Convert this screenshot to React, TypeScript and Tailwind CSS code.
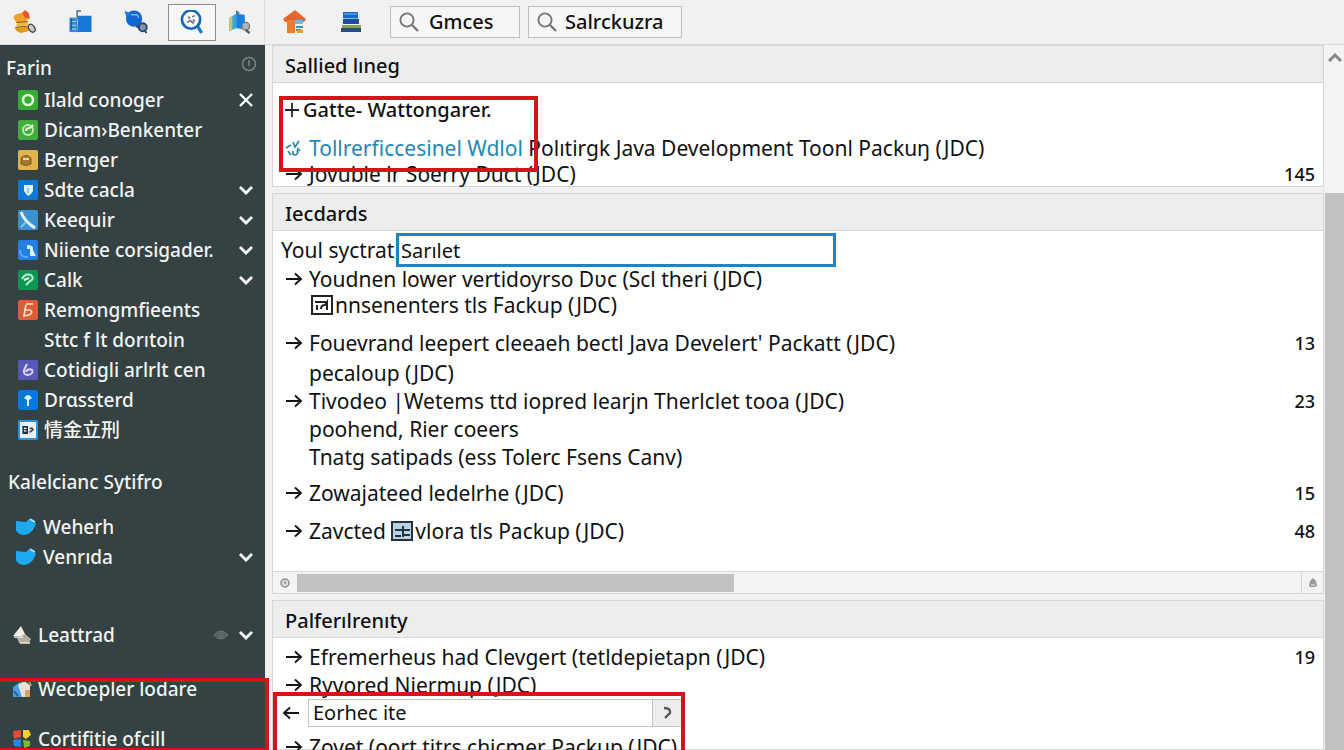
import { ReactNode } from "react";
import clsx from "clsx";

function Arrow({ left = false }: { left?: boolean }) {
    return (
        <svg viewBox="0 0 18 16" className="h-4 w-[18px] shrink-0" fill="none" stroke="#161616" strokeWidth="1.9">
            {left ? <path d="M17 8H2M8 2.5L2 8l6 5.5" /> : <path d="M1 8h15M10 2.5L16 8l-6 5.5" />}
        </svg>
    );
}

function Chevron() {
    return (
        <svg viewBox="0 0 14 10" className="h-2.5 w-3.5 shrink-0" fill="none" stroke="#fff" strokeWidth="2.8">
            <path d="M1 2l6 6 6-6" />
        </svg>
    );
}

function Magnifier() {
    return (
        <svg viewBox="0 0 20 20" className="size-5 shrink-0" fill="none" stroke="#777" strokeWidth="1.9">
            <circle cx="8" cy="8" r="6.6" />
            <path d="M13 13l6 6" strokeWidth="2.4" />
        </svg>
    );
}

/* Toolbar */

const tools: { label: string; active?: boolean; icon: ReactNode }[] = [
    {
        label: "Stamp",
        icon: (
            <>
                <path d="M1 8q0-4 8-5l6 1 2 5-4 3-9 1z" fill="#f0a325" />
                <path d="M10 3l3-3 4 3 1 6-5-1z" fill="#e5532c" />
                <path d="M5 13l9-2 3 4-7 3-6-1z" fill="#f4b63c" />
                <path d="M2 17q5 3 14 0l1 5-8 2q-6-1-7-7z" fill="#e39a1c" />
                <path d="M4 13l12-1M4 18l11-1" stroke="#6d5426" strokeWidth="1" />
                <ellipse cx="20" cy="19" rx="3" ry="4.5" transform="rotate(-35 20 19)" fill="#ccc" stroke="#444" strokeWidth="1.4" />
            </>
        ),
    },
    {
        label: "Folder",
        icon: (
            <>
                <path d="M10 6h14v17H9z" fill="#1778d8" />
                <path d="M9 10V1h4" stroke="#3c6a92" strokeWidth="1.5" fill="none" />
                <path d="M1 8h8v15H1z" fill="#2c8cdc" />
                <path d="M1 8h8M1 12h7M2 16h6M2 20h6" stroke="#a9c4c4" strokeWidth="1.2" />
                <path d="M3 9v12" stroke="#0b59b0" strokeWidth="1.5" />
            </>
        ),
    },
    {
        label: "Globe",
        icon: (
            <>
                <circle cx="10" cy="9" r="8.5" fill="#1467d0" />
                <path d="M0 1l8 3-6 3z" fill="#1a78dc" />
                <path d="M7 5h6l2 3" stroke="#72bdf5" strokeWidth="1.5" fill="none" />
                <circle cx="19" cy="18" r="4.2" fill="#8494a3" stroke="#2a4a74" strokeWidth="2" />
                <path d="M12 17l4 1M21 21l2 3" stroke="#214674" strokeWidth="2" />
            </>
        ),
    },
    {
        label: "Search",
        active: true,
        icon: (
            <>
                <circle cx="11" cy="10" r="9.5" fill="#fff" stroke="#1569b8" strokeWidth="2.8" />
                <path d="M18 17l4 7" stroke="#1d7bcd" strokeWidth="3.4" />
                <path d="M8 7l2 2M12 7l3-1M7 13l3-2 4 3M13 10l2 2" stroke="#68778a" strokeWidth="1.8" fill="none" />
            </>
        ),
    },
    {
        label: "Map",
        icon: (
            <>
                <path d="M1 8l7-4v15l-7 3z" fill="#38a6d8" />
                <path d="M8 4l9 1v15l-9-1z" fill="#1680e0" />
                <path d="M1 8l3-2v15l-3 1z" fill="#dfc24a" />
                <path d="M8 0v5l4-2z" fill="#3e7292" />
                <circle cx="18" cy="17" r="4" fill="#aeb4ba" stroke="#6e777f" strokeWidth="1.3" />
                <path d="M18 21l4 3" stroke="#5d5149" strokeWidth="2.4" />
            </>
        ),
    },
];

function Toolbar() {
    return (
        <header className="flex h-[45px] items-center border-b border-[#d8d8d8] bg-[#f1f1f1]">
            <nav className="flex h-full w-[265px] shrink-0 items-center gap-2 border-r border-[#dcdcdc]">
                {tools.map((tool) => (
                    <button
                        key={tool.label}
                        aria-label={tool.label}
                        className={clsx(
                            "flex h-[37px] w-12 shrink-0 items-center justify-center border last:-ml-2",
                            tool.active ? "border-[#8e8e8e] bg-[#f7f7f7]" : "border-transparent",
                        )}
                    >
                        <svg viewBox="0 0 24 25" className="size-6">{tool.icon}</svg>
                    </button>
                ))}
            </nav>

            <div className="flex items-center pl-[18px]">
                <button aria-label="Home" className="mr-8">
                    <svg viewBox="0 0 24 24" className="size-6">
                        <path d="M12 0l11 9-2 3H2L0 9z" fill="#e9632b" />
                        <path d="M4 10h8v13H4z" fill="#f07a32" />
                        <path d="M12 10h8v4h-8z" fill="#77b8d8" />
                        <path d="M12 14h9v9h-9z" fill="#f3f0dc" />
                        <path d="M13 17h7M13 20h5" stroke="#4792a7" strokeWidth="1.8" />
                        <path d="M14 20h6v3h-6z" fill="#d8a534" />
                    </svg>
                </button>
                <button aria-label="Library" className="mr-[27px]">
                    <svg viewBox="0 0 24 24" className="size-6">
                        <path d="M4 2h15v6H4z" fill="#176bc6" />
                        <path d="M4 9h16v5H4z" fill="#1f4e96" />
                        <path d="M5 8.500h14M5 4h13" stroke="#7dbbe8" />
                        <path d="M3 15h19v3H3z" fill="#89a53a" />
                        <path d="M2 18h20v4H2z" fill="#27536b" />
                    </svg>
                </button>
                <label className="mr-2 flex h-8 w-[130px] items-center gap-2.5 border border-[#bdbdbd] bg-[#f6f6f6] pl-2">
                    <Magnifier />
                    <input aria-label="Gmces" defaultValue="Gmces" className="w-full min-w-0 bg-transparent text-xl font-medium outline-none" />
                </label>
                <label className="flex h-8 w-[154px] items-center gap-2 border border-[#bdbdbd] bg-[#f6f6f6] pl-2">
                    <Magnifier />
                    <input aria-label="Salrckuzra" defaultValue="Salrckuzra" className="w-full min-w-0 bg-transparent text-xl font-medium outline-none" />
                </label>
            </div>
        </header>
    );
}

/* Sidebar */

function Tile({ className, children }: { className: string; children: ReactNode }) {
    return (
        <span className={clsx("flex size-5 shrink-0 items-center justify-center rounded-xs", className)}>
            <svg viewBox="0 0 20 20" className="size-5" fill="none" stroke="#fff" strokeWidth="2">{children}</svg>
        </span>
    );
}

const places = [
    { label: "Ilald conoger", end: "close", icon: <Tile className="bg-[#36ad35]"><circle cx="10" cy="10" r="5" stroke="#e4f6d6" strokeWidth="2.600" /></Tile> },
    { label: "Dicam›Benkenter", icon: <Tile className="bg-[#43ad3c]"><circle cx="10" cy="10" r="5" stroke="#b9ecae" /><path d="M8 11q0-3 4-3M12 8l3-3" stroke="#e9ffe0" /></Tile> },
    { label: "Bernger", icon: <Tile className="bg-[#e2b34d]"><path d="M3 8q5-5 10 0v6q-5 3-10 0z" fill="#a7792e" stroke="#78572a" strokeWidth="1" /><path d="M5 9h6" stroke="#f3d78c" /></Tile> },
    { label: "Sdte cacla", end: "chevron", icon: <Tile className="bg-[#0d7ad8]"><path d="M6 5h9v6q-2 4-5 5-3-3-4-5z" fill="#dff3ff" stroke="none" /><path d="M10 8v5" stroke="#8cc6ec" /></Tile> },
    { label: "Keequir", end: "chevron", icon: <Tile className="bg-[#3c91d0]"><path d="M3 2q3 9 14 16" stroke="#e1f1fc" strokeWidth="3" /><path d="M3 17l5-5" stroke="#8bc4e8" /></Tile> },
    { label: "Niiente corsigader.", end: "chevron", icon: <Tile className="bg-[#237ee4]"><path d="M9 5q7 0 6 5l3 6h-6v-7H9z" fill="#dfefff" stroke="none" /><path d="M2 10q0 8 8 7" stroke="#55a8ff" /></Tile> },
    { label: "Calk", end: "chevron", icon: <Tile className="bg-[#109653]"><path d="M4 9q3-6 9-4 4 4-1 6l-4 4" stroke="#b8f1cb" /><path d="M6 10l5-2" /></Tile> },
    { label: "Remongmfieents", icon: <Tile className="bg-[#dc5c3b]"><path d="M8 4h7M8 5l-1 5h5q4 2-1 5l-5 1 1-6" stroke="#ffe2bd" strokeWidth="1.7" /></Tile> },
    { label: "Sttc f lt dorıtoin", icon: <span className="size-5 shrink-0" /> },
    { label: "Cotidigli arlrlt cen", icon: <Tile className="bg-[#5858bc]"><path d="M9 4l-3 6q-1 5 4 5 6-1 4-5-4-2-6 2" stroke="#dad8ff" /></Tile> },
    { label: "Drɑssterd", icon: <Tile className="bg-[#0879dc]"><path d="M6 8q4-6 8 0l-3 2v6H9v-6z" fill="#d8efff" stroke="none" /></Tile> },
    { label: "情金立刑", icon: <Tile className="border-2 border-[#2994df] bg-[#e9f3f8]"><path d="M3 5h7v10H3z" fill="#26323a" stroke="none" /><path d="M5 8h3M5 11h3" strokeWidth="1.500" /><path d="M12 8h4M12 13l5-4" stroke="#34444f" /></Tile> },
];

function Bird() {
    return (
        <svg viewBox="0 0 22 18" className="h-[18px] w-[22px] shrink-0">
            <path d="M1 3l10 1 3-3 4 1 3 4-3 6q-4 5-10 5-6-1-7-5z" fill="#1eaaf1" />
            <path d="M15 1l5 3" stroke="#a9e2ff" strokeWidth="1.500" />
        </svg>
    );
}

function Sidebar() {
    return (
        <aside className="w-[265px] shrink-0 overflow-hidden bg-[#344243] text-[19px]/[30px] font-medium text-[#f3f3f3]">
            <div className="flex h-10 items-center justify-between pt-1.5 pr-2 pl-1.5">
                <h2>Farin</h2>
                <svg viewBox="0 0 16 16" className="-mt-2 size-4" fill="none" stroke="#7b8586" strokeWidth="1.500">
                    <circle cx="8" cy="8" r="6.500" />
                    <path d="M8 4v6" />
                </svg>
            </div>

            <ul>
                {places.map((place) => (
                    <li key={place.label} className="flex h-[30px] items-center gap-1.5 pr-3 pl-[18px]">
                        {place.icon}
                        <a href="#" className="flex-1 whitespace-nowrap">{place.label}</a>
                        {place.end === "chevron" && <Chevron />}
                        {place.end === "close" && (
                            <svg viewBox="0 0 14 14" className="size-3.5" stroke="#fff" strokeWidth="2.400">
                                <path d="M1 1l12 12M13 1L1 13" />
                            </svg>
                        )}
                    </li>
                ))}
            </ul>

            <h2 className="mt-[22px] pl-2">Kalelcianc Sytifro</h2>

            <ul className="mt-[15px]">
                <li className="flex h-[30px] items-center gap-1.5 pl-[15px]">
                    <Bird />
                    <a href="#">Weherh</a>
                </li>
                <li className="flex h-[30px] items-center gap-1.5 pr-3 pl-[15px]">
                    <Bird />
                    <a href="#" className="flex-1">Venrıda</a>
                    <Chevron />
                </li>
                <li className="mt-12 flex h-[30px] items-center pr-3 pl-3">
                    <svg viewBox="0 0 20 20" className="mr-1.5 size-5">
                        <path d="M9 1l5 10H1z" fill="#f2efe4" />
                        <path d="M5 13l8-4 6 5-2 4H7z" fill="#b8ae9d" />
                        <path d="M2 12h9M8 18h10" stroke="#efe9d8" strokeWidth="1.500" />
                    </svg>
                    <a href="#" className="flex-1">Leattrad</a>
                    <svg viewBox="0 0 16 12" className="mr-2.5 h-3 w-4" fill="#525f60" stroke="#6b7677">
                        <path d="M1 6q7-8 14 0-7 8-14 0z" />
                        <circle cx="8" cy="6" r="2" />
                    </svg>
                    <Chevron />
                </li>
                <li className="mt-6 flex h-[30px] items-center gap-1.5 pl-3">
                    <svg viewBox="0 0 20 20" className="size-5">
                        <path d="M1 8l7-5 4 4v11H1z" fill="#4b9ce1" />
                        <path d="M6 6l6-4 6 4v12h-8z" fill="#e9e2da" />
                        <path d="M13 11h5v7h-5z" fill="#d8a26b" />
                        <path d="M2 12l4 5" stroke="#155fb0" strokeWidth="2" />
                        <path d="M17 2l2 5" stroke="#e97b57" strokeWidth="2" />
                    </svg>
                    <a href="#">Wecbepler lodare</a>
                </li>
                <li className="mt-5 flex h-[30px] items-center gap-1.5 pl-3">
                    <svg viewBox="0 0 20 20" className="size-5">
                        <path d="M1 2l8-1v7l-7 2z" fill="#e34b35" />
                        <path d="M11 1h6l2 5-5 4-3-2z" fill="#f2cf34" />
                        <path d="M1 11l8-1v8l-7-1z" fill="#268bdf" />
                        <path d="M11 11l7 1v5l-6 2z" fill="#7abb3d" />
                    </svg>
                    <a href="#">Cortifitie ofcill</a>
                </li>
            </ul>
        </aside>
    );
}

/* Main panels */

type RowProps = {
    children: ReactNode;
    arrow?: boolean;
    short?: boolean;
    count?: string;
    className?: string;
};

function Row({ children, arrow = false, short = false, count, className }: RowProps) {
    return (
        <li className={clsx("flex items-center pr-2 pl-3", short ? "h-6" : "h-7", className)}>
            <span className="flex w-6 shrink-0">{arrow && <Arrow />}</span>
            <span className="flex flex-1 items-center whitespace-pre">{children}</span>
            {count && <span className="text-lg font-medium">{count}</span>}
        </li>
    );
}

function Panel({ title, children, className }: { title: string; children: ReactNode; className?: string }) {
    return (
        <section className={clsx("border border-[#d6d6d6] bg-white", className)}>
            <h2 className="h-[37px] border-b border-[#d6d6d6] bg-[#ededed] pl-3 text-xl/10 font-medium">{title}</h2>
            {children}
        </section>
    );
}

export default function App() {
    return (
        <div className="flex h-screen flex-col overflow-hidden bg-[#f1f1f1] font-['Noto_Sans','Noto_Sans_CJK_SC',sans-serif] text-[#111]">
            <Toolbar />

            <div className="relative flex min-h-0 flex-1">
                <Sidebar />

                <main className="flex min-w-0 flex-1 flex-col gap-1.5 overflow-hidden pr-px pl-[7px] text-[21px]/7">
                    <Panel title="Sallied lıneg" className="relative shrink-0">
                        <ul className="pt-[13px]">
                            <li className="flex h-7 items-center gap-1 pl-3 font-medium">
                                <svg viewBox="0 0 14 14" className="size-3.5" stroke="#222" strokeWidth="1.800">
                                    <path d="M7 0v14M0 7h14" />
                                </svg>
                                <span className="text-xl">Gatte- Wattongarer.</span>
                            </li>
                            <li className="mt-2.5 flex h-7 items-center pl-3 whitespace-pre">
                                <svg viewBox="0 0 18 18" className="mr-1.5 size-[18px]" fill="none" stroke="#2785a9" strokeWidth="1.700">
                                    <path d="M1 9l5-3M8 3l2 5 4-6M12 9l3 3M3 12l3 4M8 12q-1 4 2 4 4-1 2-5" />
                                </svg>
                                <a href="#" className="text-[#2089b5]">Tollrerficcesinel Wdlol</a>
                                <span> Polıtirgk Java Development Toonl Packuŋ (JDC)</span>
                            </li>
                            <Row arrow short count="145">Jovuble lr Soerry Duct (JDC)</Row>
                        </ul>
                        <div className="absolute top-[50px] left-[6px] h-[76px] w-[259px] border-4 border-[#d51419]" />
                    </Panel>

                    <Panel title="Iecdards" className="shrink-0">
                        <div className="flex h-9 items-center pt-0.5 pl-2">
                            <label htmlFor="filter" className="w-[115px] whitespace-nowrap">Youl syctrat</label>
                            <input id="filter" defaultValue="Sarılet" className="h-[34px] w-[440px] border-3 border-[#1c84c8] pl-0.5 text-xl outline-none" />
                        </div>
                        <ul className="pb-[26px]">
                            <Row arrow short>Youdnen lower vertidoyrso Dʋc (Scl theri (JDC)</Row>
                            <Row>
                                <svg viewBox="0 0 22 20" className="mx-0.5 h-5 w-[22px]" fill="none" stroke="#222" strokeWidth="2">
                                    <path d="M1 1h20v18H1zM4 7h13M6 10v5M10 14q0-4 4-4l2-3v8" />
                                </svg>
                                nnsenenters tls Fackup (JDC)
                            </Row>
                            <Row arrow count="13" className="mt-2.5">Fouevrand leepert cleeaeh bectl Java Develert' Packatt (JDC)</Row>
                            <Row className="mt-0.5">pecaloup (JDC)</Row>
                            <Row arrow count="23">Tivodeo |Wetems ttd iopred learjn Therlclet tooa (JDC)</Row>
                            <Row>poohend, Rier coeers</Row>
                            <Row>Tnatg satipads (ess Tolerc Fsens Canv)</Row>
                            <Row arrow count="15" className="mt-2">Zowajateed ledelrhe (JDC)</Row>
                            <Row arrow count="48" className="mt-2.5">
                                Zavcted{" "}
                                <svg viewBox="0 0 22 20" className="mr-0.5 h-5 w-[22px]" fill="none" stroke="#26333c" strokeWidth="2">
                                    <path d="M1 1h20v18H1z" fill="#b9d3e4" />
                                    <path d="M4 9h15M4 15h6M12 14h7M12 5v11" />
                                </svg>
                                vlora tls Packup (JDC)
                            </Row>
                        </ul>
                        <div className="flex h-[22px] items-center border-t border-[#d6d6d6] bg-[#f3f3f3]">
                            <span className="flex w-6 justify-center">
                                <svg viewBox="0 0 10 10" className="size-2.5" fill="#ddd" stroke="#8c8c8c" strokeWidth="1.500">
                                    <circle cx="5" cy="5" r="4" />
                                    <path d="M5 3v3" />
                                </svg>
                            </span>
                            <div className="flex h-full flex-1 items-center">
                                <div className="h-[18px] w-[437px] bg-[#c1c1c1]" />
                            </div>
                            <span className="flex h-full w-[22px] items-center justify-center border-l border-[#d6d6d6]">
                                <svg viewBox="0 0 10 10" className="size-2.5" fill="#999">
                                    <path d="M5 0l3 3 1 5-2 1H2L1 8l1-5z" />
                                    <path d="M3 7h4" stroke="#eee" />
                                </svg>
                            </span>
                        </div>
                    </Panel>

                    <Panel title="Palferılrenıty" className="relative min-h-0 flex-1">
                        <ul className="pt-[5px]">
                            <Row arrow count="19">Efremerheus had Clevgert (tetldepietapn (JDC)</Row>
                            <Row arrow>Ryvored Niermup (JDC)</Row>
                            <li className="flex h-7 items-center pl-[9px]">
                                <Arrow left />
                                <input aria-label="Filter entries" defaultValue="Eorhec ite" className="ml-2 h-7 w-[345px] border border-[#c4c4c4] pl-1 text-xl outline-none" />
                                <button aria-label="Next" className="flex h-7 w-7 items-center justify-center border-y border-[#c4c4c4] bg-[#ededed]">
                                    <svg viewBox="0 0 10 14" className="h-3.5 w-2.5" fill="none" stroke="#555" strokeWidth="2.400">
                                        <path d="M2 2q7 0 6 5l-5 5" />
                                    </svg>
                                </button>
                            </li>
                            <Row arrow className="mt-1.5">Zovet (oort titrs chicmer Packup (JDC)</Row>
                        </ul>
                        <div className="absolute top-[91px] left-0 h-[70px] w-[412px] border-4 border-[#d51419]" />
                    </Panel>
                </main>

                <div className="flex w-[19px] shrink-0 flex-col bg-[#f3f3f3]">
                    <button aria-label="Scroll up" className="flex h-6 items-center justify-center">
                        <svg viewBox="0 0 14 10" className="h-2.5 w-3.5" fill="none" stroke="#858585" strokeWidth="3">
                            <path d="M1 9l6-6 6 6" />
                        </svg>
                    </button>
                    <div className="mt-[124px] flex-1 bg-[#c1c1c1]" />
                </div>

                <div className="absolute -bottom-0.5 left-[-4px] h-[74px] w-[273px] border-4 border-[#d51419]" />
            </div>
        </div>
    );
}
